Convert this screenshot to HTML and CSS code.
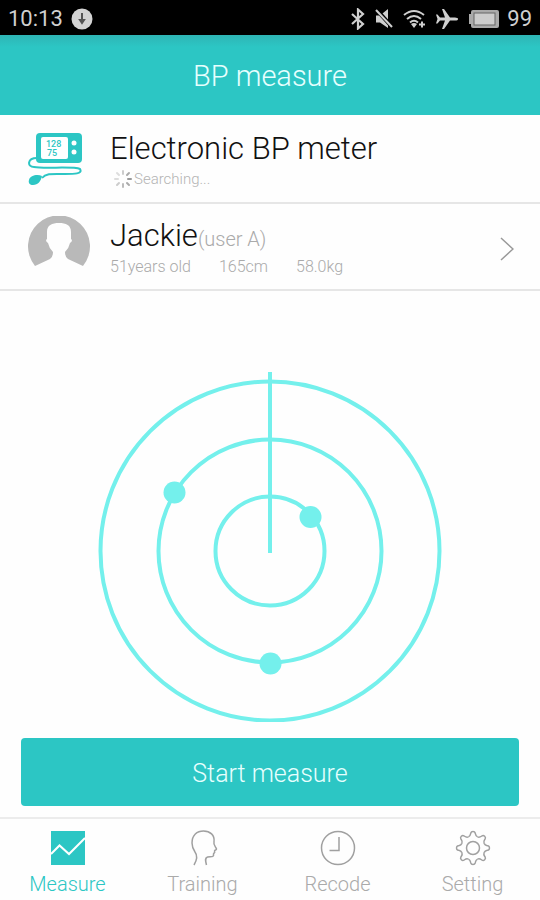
FILE: index.html
```html
<!DOCTYPE html>
<html lang="en">
<head>
    <meta charset="UTF-8">
    <meta name="viewport" content="width=device-width, initial-scale=1.0">
    <title>BP measure</title>
    <link rel="stylesheet" href="styles.css">
</head>
<body>
    <div class="statusbar">
        <span>10:13</span>
        <svg class="download" width="22" height="22" viewBox="0 0 22 22">
            <circle cx="11" cy="11" r="10.5" fill="#d4d4d4"/>
            <path d="M11 5v8M9 12l2 3 2-3z" fill="#555" stroke="#555" stroke-width="2"/>
        </svg>
        <div class="status-icons">
            <svg width="14" height="22" viewBox="0 0 14 22" fill="none" stroke="#cfcfcf" stroke-width="2.2">
                <path d="M1 6l11 10-5 4.500V1.500L12 6 1 16"/>
            </svg>
            <svg width="18" height="20" viewBox="0 0 18 20">
                <path d="M1 6.500h4L13 0v19L5 13.500H1z" fill="#cfcfcf"/>
                <path d="M1 0l16 18" stroke="#000" stroke-width="4"/>
                <path d="M1 1l16 17" stroke="#cfcfcf" stroke-width="2"/>
            </svg>
            <svg width="22" height="20" viewBox="0 0 22 20" fill="none" stroke="#cfcfcf" stroke-width="2">
                <path d="M1 6q10-8 20 0M4 10q7-6 14 0M7 13.500q4-3.500 8 0"/>
                <path d="M8 15q3-2 6 0l-3 4z" fill="#cfcfcf" stroke="none"/>
                <path d="M19 12.500v6M16 15.500h6"/>
            </svg>
            <svg width="24" height="20" viewBox="0 0 24 20" fill="#cfcfcf">
                <path d="M23 10q0-1.500-3-1.500h-5L9 0H7l3 8.500H5L2.500 5.500H1L2.500 10 1 14.500h1.500L5 11.500h5L7 20h2l6-8.500h5q3 0 3-1.500z"/>
            </svg>
            <svg width="30" height="18" viewBox="0 0 30 18">
                <path d="M4 0h24q2 0 2 2v14q0 2-2 2H4q-2 0-2-2v-2H0V4h2V2q0-2 2-2z" fill="#aaa"/>
                <rect x="5" y="3" width="21" height="12" fill="#ccc" stroke="#666"/>
            </svg>
        </div>
        <span>99</span>
    </div>

    <header class="titlebar">
        <h1>BP measure</h1>
    </header>

    <section class="row device">
        <svg class="row-icon" width="64" height="54" viewBox="0 0 64 54">
            <path d="M9 25C-1 25-1 34 6 34c10 2 40-1 46 2 3 5-6 5-15 5-12 0-19-1-23 4" fill="none" stroke="#2cc6c4" stroke-width="2"/>
            <path d="M1 47c1-5 9-6 13-4-1 5-4 9-9 9-3 0-5-2-4-5z" fill="#2cc6c4"/>
            <rect x="8" y="0" width="46" height="30" rx="4" fill="#2cc6c4"/>
            <rect x="13" y="4" width="27" height="22" rx="2" fill="#fff"/>
            <circle cx="46" cy="10" r="2.500" fill="#fff"/>
            <circle cx="46" cy="19" r="2.500" fill="#fff"/>
            <text class="lcd" x="18" y="14">128</text>
            <text class="lcd" x="19" y="23">75</text>
        </svg>
        <div class="row-text">
            <h2>Electronic BP meter</h2>
            <p class="searching">
                <svg width="22" height="20" viewBox="-11 -10 22 20" stroke-width="2" stroke-linecap="round">
                    <path d="M0-5v-3" stroke="#ccc"/>
                    <path d="M4-4l2-2" stroke="#aaa"/>
                    <path d="M5 0h3" stroke="#999"/>
                    <path d="M4 4l2 2" stroke="#aaa"/>
                    <path d="M0 5v3" stroke="#bbb"/>
                    <path d="M-4 4l-2 2" stroke="#ccc"/>
                    <path d="M-5 0h-3" stroke="#ddd"/>
                    <path d="M-4-4l-2-2" stroke="#ddd"/>
                </svg>
                <span>Searching...</span>
            </p>
        </div>
    </section>

    <a class="row user" href="#">
        <svg class="row-icon" width="64" height="54" viewBox="0 0 64 54">
            <path d="M7 50A31 31 0 1 1 55 50L40 43Q37 41 37 36Q41 32 42 27Q44 26 44 24L43 23V16C43 9 38 7 31 7S19 9 19 16V23L18 24Q18 26 20 27Q21 32 25 36Q25 41 22 43Z" fill="#b9b9b9"/>
        </svg>
        <div class="row-text">
            <h2>Jackie<small>(user A)</small></h2>
            <p class="details"><span>51years old</span><span>165cm</span><span>58.0kg</span></p>
        </div>
        <svg class="chevron" width="14" height="24" viewBox="0 0 14 24" fill="none" stroke="#999" stroke-width="1.500">
            <path d="M1 1l12 11L1 23"/>
        </svg>
    </a>

    <main>
        <svg class="radar" width="344" height="350" viewBox="0 0 344 350" fill="none" stroke="#74f0ec" stroke-width="4">
            <circle cx="172" cy="179" r="169.500"/>
            <circle cx="172" cy="179" r="111.500"/>
            <circle cx="172" cy="179" r="54.500"/>
            <path d="M172 0v181"/>
            <g fill="#74f0ec" stroke="none">
                <circle cx="76.500" cy="120.500" r="11"/>
                <circle cx="212.500" cy="145" r="11"/>
                <circle cx="172.500" cy="291.500" r="11"/>
            </g>
        </svg>
        <button class="start" type="button">Start measure</button>
    </main>

    <nav class="tabs">
        <a class="active" href="#">
            <svg width="36" height="36" viewBox="0 0 36 36">
                <rect x="1" y="1" width="34" height="34" fill="#2cc6c4"/>
                <path d="M1 24l8.500-8.500L19 24 35 8" fill="none" stroke="#fff" stroke-width="2"/>
            </svg>
            Measure
        </a>
        <a href="#">
            <svg width="36" height="36" viewBox="0 0 36 36" fill="none" stroke="#a0a0a0" stroke-width="1.500">
                <path d="M9 35c3-5 4-9 1-13-2-3-3-6-3-9C7 5 12 1 18.500 1 25 1 30 5 29 12c-1 3 2 5 2.500 7 0 1-2 1-2 2 1 2-1 2-1 3 1 4-4 2-6 3-3 1-2 4-1 8"/>
            </svg>
            Training
        </a>
        <a href="#">
            <svg width="36" height="36" viewBox="0 0 36 36" fill="none" stroke="#a0a0a0" stroke-width="1.500">
                <circle cx="18" cy="18" r="16.500"/>
                <path d="M19 7v13.500H9.500"/>
            </svg>
            Recode
        </a>
        <a href="#">
            <svg width="36" height="36" viewBox="0 0 36 36" fill="none" stroke="#a0a0a0" stroke-width="1.500">
                <circle cx="18" cy="18" r="6.500"/>
                <path id="tooth" d="M13.400 6.900C15.500 6 15.400 5 15.800 3Q16.200 1.500 18 1.500Q19.800 1.500 20.200 3C20.600 5 20.500 6 22.600 6.900"/>
                <use href="#tooth" transform="rotate(45 18 18)"/>
                <use href="#tooth" transform="rotate(90 18 18)"/>
                <use href="#tooth" transform="rotate(135 18 18)"/>
                <use href="#tooth" transform="rotate(180 18 18)"/>
                <use href="#tooth" transform="rotate(225 18 18)"/>
                <use href="#tooth" transform="rotate(270 18 18)"/>
                <use href="#tooth" transform="rotate(315 18 18)"/>
            </svg>
            Setting
        </a>
    </nav>
</body>
</html>
```
FILE: styles.css
```css
* {
    box-sizing: border-box;
}

body {
    display: flex;
    flex-direction: column;
    min-height: 100vh;
    margin: 0;
    background-color: #fefefe;
    font-family: Roboto, sans-serif;
    font-weight: 300;
}

h1, h2, p {
    margin: 0;
    font-weight: 300;
}

a {
    color: inherit;
    text-decoration: none;
}

svg {
    flex-shrink: 0;
}

.statusbar {
    display: flex;
    align-items: center;
    height: 35px;
    padding: 2px 8px 0;
    background-color: #000;
    color: #cfcfcf;
    font-size: 22px;
    font-weight: 400;
}

.download {
    margin-left: 8px;
}

.status-icons {
    display: flex;
    align-items: center;
    gap: 10px;
    margin-left: auto;
    margin-right: 8px;
}

.titlebar {
    display: flex;
    align-items: center;
    justify-content: center;
    height: 80px;
    padding-top: 2px;
    background: linear-gradient(#2eb5b5, #2cc6c4 12px);
    color: #e6fffe;
}

.titlebar h1 {
    font-size: 29px;
}

.row {
    display: flex;
    align-items: flex-start;
    padding: 12px 26px 8px 28px;
    border-bottom: 2px solid #e6e6e6;
}

.device {
    height: 89px;
    padding-top: 18px;
}

.user {
    height: 87px;
}

.row-icon {
    margin-right: 18px;
}

.row-text {
    flex: 1;
}

.user .row-text {
    padding-top: 4px;
}

.row h2 {
    color: #111;
    font-size: 31px;
    line-height: 32px;
}

.row h2 small {
    color: #aaa;
    font-size: 20px;
}

.row p {
    display: flex;
    align-items: center;
    color: #aaa;
    font-size: 16px;
    line-height: 24px;
}

.row .searching {
    color: #b4b4b4;
    font-size: 15px;
    line-height: 28px;
}

.searching svg {
    margin-left: 2px;
}

.details {
    gap: 28px;
}

.chevron {
    align-self: center;
}

.lcd {
    fill: #2cc6c4;
    font-size: 9px;
    font-weight: 500;
}

main {
    flex: 1;
    display: flex;
    flex-direction: column;
    align-items: center;
    justify-content: flex-end;
    gap: 16px;
    padding: 24px 21px 11px;
}

.radar {
    max-width: 100%;
}

.start {
    width: 100%;
    height: 68px;
    border: none;
    border-radius: 4px;
    background-color: #2cc6c4;
    color: #e6fffe;
    font-family: inherit;
    font-size: 25px;
    font-weight: 300;
    padding-top: 4px;
}

.tabs {
    display: flex;
    height: 83px;
    border-top: 2px solid #ececec;
    color: #aaa;
    font-size: 20px;
    line-height: 24px;
}

.tabs a {
    flex: 1;
    display: flex;
    flex-direction: column;
    align-items: center;
    gap: 6px;
    padding-top: 11px;
}

.tabs .active {
    color: #2cc6c4;
}
```
